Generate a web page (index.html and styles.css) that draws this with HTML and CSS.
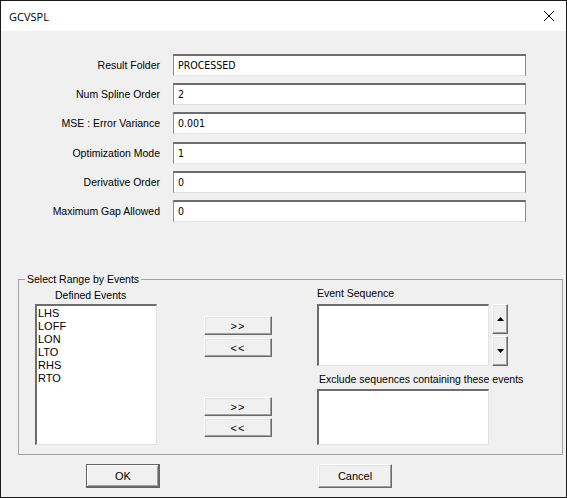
FILE: index.html
```html
<!DOCTYPE html>
<html>
<head>
<meta charset="utf-8">
<link rel="stylesheet" href="styles.css">
</head>
<body>
<div class="window">
  <div class="titlebar">
    <span class="title">GCVSPL</span>
    <svg class="close" width="12" height="12" viewBox="0 0 12 12"><path d="M1 1 L11 11 M11 1 L1 11" stroke="#000" stroke-width="1" fill="none"/></svg>
  </div>
  <div class="client">
    <div class="form">
      <label class="lbl">Result Folder</label><div class="field">PROCESSED</div>
      <label class="lbl">Num Spline Order</label><div class="field">2</div>
      <label class="lbl">MSE : Error Variance</label><div class="field">0.001</div>
      <label class="lbl">Optimization Mode</label><div class="field">1</div>
      <label class="lbl">Derivative Order</label><div class="field">0</div>
      <label class="lbl">Maximum Gap Allowed</label><div class="field">0</div>
    </div>
    <fieldset class="group">
      <legend class="legend">Select Range by Events</legend>
      <div class="group-body">
        <div class="col-left">
          <div class="cap cap-defined">Defined Events</div>
          <div class="listbox list-defined">
            <div>LHS</div><div>LOFF</div><div>LON</div><div>LTO</div><div>RHS</div><div>RTO</div>
          </div>
        </div>
        <div class="col-mid">
          <button class="btn arrow">&gt;&gt;</button>
          <button class="btn arrow arrow-2">&lt;&lt;</button>
          <button class="btn arrow arrow-3">&gt;&gt;</button>
          <button class="btn arrow arrow-4">&lt;&lt;</button>
        </div>
        <div class="col-right">
          <div class="cap">Event Sequence</div>
          <div class="seq-row">
            <div class="listbox list-seq"></div>
            <div class="spin">
              <button class="btn spin-btn"><svg width="7" height="4" viewBox="0 0 7 4"><path d="M3.5 0 L7 4 L0 4 Z" fill="#000"/></svg></button>
              <button class="btn spin-btn spin-down"><svg width="7" height="4" viewBox="0 0 7 4"><path d="M0 0 L7 0 L3.5 4 Z" fill="#000"/></svg></button>
            </div>
          </div>
          <div class="cap cap-exclude">Exclude sequences containing these events</div>
          <div class="listbox list-exclude"></div>
        </div>
      </div>
    </fieldset>
    <div class="actions">
      <button class="btn push default">OK</button>
      <button class="btn push cancel">Cancel</button>
    </div>
  </div>
</div>
</body>
</html>
```

FILE: styles.css
```css
html, body {
  margin: 0;
  padding: 0;
  background: #f0f0f0;
}
.window {
  width: 567px;
  height: 498px;
  box-sizing: border-box;
  border: 1px solid #1a1a1a;
  background: #f0f0f0;
  font-family: "Liberation Sans", Arial, sans-serif;
  font-size: 10.5px;
  color: #000;
  display: flex;
  flex-direction: column;
}
.titlebar {
  height: 30px;
  background: #fff;
  display: flex;
  align-items: center;
  justify-content: space-between;
  padding: 0 11px 0 8px;
  flex: none;
}
.title {
  font-family: "Open Sans", "Noto Sans", sans-serif;
  font-size: 11px;
  padding-top: 1px;
}
.close {
  display: block;
}
.client {
  flex: 1;
  display: flex;
  flex-direction: column;
}
.form {
  display: grid;
  grid-template-columns: 159px 353px;
  grid-template-rows: 29px 29px 30px 29px 29px 22px;
  column-gap: 13px;
  padding-top: 23px;
}
.lbl {
  text-align: right;
  height: 22px;
  line-height: 22px;
  white-space: nowrap;
}
.field {
  height: 22px;
  box-sizing: border-box;
  background: #fff;
  border-style: solid;
  border-width: 2px 1px 1px 1px;
  border-color: #6d6d6d #8a8a8a #e3e3e3 #8a8a8a;
  padding: 1px 4px 0 4px;
  line-height: 16px;
  font-family: "DejaVu Sans Condensed", "Liberation Sans", sans-serif;
  font-stretch: condensed;
  font-size: 10.5px;
}
.group {
  margin: 50px 0 0 17px;
  width: 545px;
  box-sizing: border-box;
  padding: 0 0 9px 0;
  border: 1px solid #a0a0a0;
  min-width: 0;
}
.legend {
  margin-left: 6px;
  padding: 0 2px;
  line-height: 14px;
}
.group-body {
  display: flex;
  align-items: flex-start;
}
.col-left {
  margin-left: 16px;
  width: 122px;
}
.cap {
  line-height: 14px;
  white-space: nowrap;
}
.cap-defined {
  margin-top: 2px;
  padding-left: 20px;
}
.listbox {
  background: #fff;
  box-sizing: border-box;
  border-style: solid;
  border-width: 2px 1px 1px 2px;
  border-color: #6d6d6d #e3e3e3 #e3e3e3 #6d6d6d;
}
.list-defined {
  margin-top: 2px;
  height: 141px;
  padding: 1px 0 0 1px;
  line-height: 13px;
  font-size: 11px;
}
.col-mid {
  margin-left: 47px;
  width: 68px;
  margin-top: 30px;
  display: flex;
  flex-direction: column;
}
.btn {
  font-family: "Liberation Sans", Arial, sans-serif;
  font-size: 11px;
  color: #000;
  background: #f0f0f0;
  box-sizing: border-box;
  border-style: solid;
  border-width: 1px;
  border-color: #ffffff #696969 #696969 #ffffff;
  box-shadow: inset -1px -1px 0 #a0a0a0, inset 1px 1px 0 #e3e3e3;
  padding: 0;
  margin: 0;
  display: flex;
  align-items: center;
  justify-content: center;
}
.arrow {
  width: 68px;
  height: 19px;
  letter-spacing: 1px;
}
.arrow-2 { margin-top: 3px; }
.arrow-3 { margin-top: 40px; }
.arrow-4 { margin-top: 2px; }
.col-right {
  margin-left: 45px;
  width: 192px;
}
.seq-row {
  margin-top: 4px;
  display: flex;
  align-items: flex-start;
}
.list-seq {
  width: 172px;
  height: 62px;
}
.spin {
  margin-left: 3px;
  display: flex;
  flex-direction: column;
}
.spin-btn {
  width: 16px;
  height: 30px;
}
.spin-down {
  margin-top: 2px;
}
.cap-exclude {
  margin-top: 6px;
  padding-left: 2px;
}
.list-exclude {
  margin-top: 3px;
  width: 172px;
  height: 56px;
}
.actions {
  display: flex;
  margin-top: 9px;
  padding-left: 85px;
}
.push {
  width: 74px;
  height: 24px;
}
.default {
  border-color: #646464;
  box-shadow: inset -1px -1px 0 #696969, inset 1px 1px 0 #fff, inset -2px -2px 0 #a0a0a0;
}
.cancel {
  margin-left: 158px;
}
```
